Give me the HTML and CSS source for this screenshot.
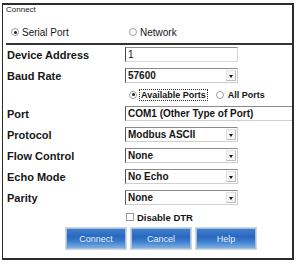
FILE: index.html
```html
<!DOCTYPE html>
<html>
<head>
<meta charset="utf-8">
<link rel="stylesheet" href="styles.css">
</head>
<body>
<div class="frame">
  <div class="title">Connect</div>
  <div class="conn-type">
    <div class="radio-item serial"><span class="radio on"></span><span>Serial Port</span></div>
    <div class="radio-item"><span class="radio"></span><span>Network</span></div>
  </div>
  <div class="sep"></div>
  <div class="form">
    <div class="lbl">Device Address</div>
    <div class="field input"><span class="val">1</span></div>

    <div class="lbl">Baud Rate</div>
    <div class="field select"><span class="val">57600</span><span class="arrow"></span></div>

    <div class="lbl"></div>
    <div class="ports">
      <span class="radio on"></span><span class="focus">Available Ports</span>
      <span class="radio all"></span><span>All Ports</span>
    </div>

    <div class="lbl">Port</div>
    <div class="field wide"><span class="val">COM1 (Other Type of Port)</span></div>

    <div class="lbl">Protocol</div>
    <div class="field select"><span class="val">Modbus ASCII</span><span class="arrow"></span></div>

    <div class="lbl">Flow Control</div>
    <div class="field select"><span class="val">None</span><span class="arrow"></span></div>

    <div class="lbl">Echo Mode</div>
    <div class="field select"><span class="val">No Echo</span><span class="arrow"></span></div>

    <div class="lbl">Parity</div>
    <div class="field select"><span class="val">None</span><span class="arrow"></span></div>

    <div class="lbl"></div>
    <div class="check"><span class="box"></span><span>Disable DTR</span></div>
  </div>
  <div class="buttons">
    <div class="btn">Connect</div>
    <div class="btn">Cancel</div>
    <div class="btn">Help</div>
  </div>
</div>
</body>
</html>
```

FILE: styles.css
```css
* { box-sizing: border-box; }
html, body { margin: 0; padding: 0; background: #fff; }
body { font-family: "Liberation Sans", Arial, sans-serif; color: #151515; }

.frame {
  margin: 3px 0 0 2px;
  width: 292px;
  height: 257px;
  border: 2px solid #2b2b2b;
  border-left-width: 1px;
  display: flex;
  flex-direction: column;
}

.title {
  height: 10px;
  line-height: 10px;
  font-size: 8px;
  padding-left: 3px;
  color: #222;
}

.conn-type {
  margin-top: 11px;
  height: 12px;
  display: flex;
  align-items: center;
  padding-left: 8px;
  font-size: 10px;
}
.radio-item { display: flex; align-items: center; gap: 3px; }
.radio-item.serial { width: 118px; }

.radio {
  width: 8px;
  height: 8px;
  border-radius: 50%;
  border: 1px solid #a0a0a0;
  background: #fff;
  position: relative;
  flex: none;
}
.radio.on::after {
  content: "";
  position: absolute;
  left: 1.5px; top: 1.5px;
  width: 3px; height: 3px;
  border-radius: 50%;
  background: #222;
}

.sep {
  margin-top: 5px;
  margin-left: 3px;
  height: 2px;
  background: #333;
}

.form {
  margin-top: 2px;
  padding-left: 4px;
  display: grid;
  grid-template-columns: 118px 1fr;
  grid-template-rows: 15px 15px 11px 15px 15px 15px 15px 15px 12px;
  row-gap: 6px;
}

.lbl {
  font-size: 11px;
  font-weight: bold;
  display: flex;
  align-items: center;
  color: #161616;
}

.field {
  width: 113px;
  height: 15px;
  border: 1px solid #cfcfcf;
  border-top-color: #8a8a8a;
  border-left-color: #555;
  display: flex;
  align-items: center;
  font-size: 10px;
  font-weight: bold;
  background: #fff;
}
.field.input { font-weight: normal; border-color: #8a8a8a #d8d8d8 #d8d8d8 #444; }
.field.wide { width: 167px; border-right: none; }
.val { flex: 1; padding-left: 2px; white-space: nowrap; overflow: hidden; }

.arrow {
  width: 10px;
  height: 11px;
  margin-right: 1px;
  border: 1px solid #e2e2e2;
  border-right-color: #bbb;
  border-bottom-color: #bbb;
  background: #f6f6f6;
  position: relative;
  flex: none;
}
.arrow::after {
  content: "";
  position: absolute;
  left: 2px; top: 4px;
  border-left: 2.5px solid transparent;
  border-right: 2.5px solid transparent;
  border-top: 3px solid #111;
}

.ports {
  display: flex;
  align-items: center;
  padding-left: 4px;
  font-size: 9px;
  font-weight: bold;
  gap: 2px;
}
.focus { border: 1px dotted #333; padding: 0 1px; line-height: 10px; }
.radio.all { margin-left: 6px; margin-right: 2px; }

.check {
  display: flex;
  align-items: center;
  gap: 3px;
  font-size: 9.5px;
  font-weight: bold;
  padding-left: 1px;
}
.box {
  width: 8px; height: 8px;
  border: 1px solid #999;
  background: #fff;
}

.buttons {
  margin-top: 5px;
  padding-left: 63px;
  display: flex;
  gap: 5px;
}
.btn {
  width: 60px;
  height: 21px;
  border: 1px solid #a9bfd8;
  box-shadow: 0 0 0 1px #d0d8e0;
  background: linear-gradient(#3f7fcf 0%, #2a68bd 40%, #3b7ccc 65%, #7db0e3 100%);
  color: #e4eefa;
  font-size: 9px;
  display: flex;
  align-items: center;
  justify-content: center;
}
```
